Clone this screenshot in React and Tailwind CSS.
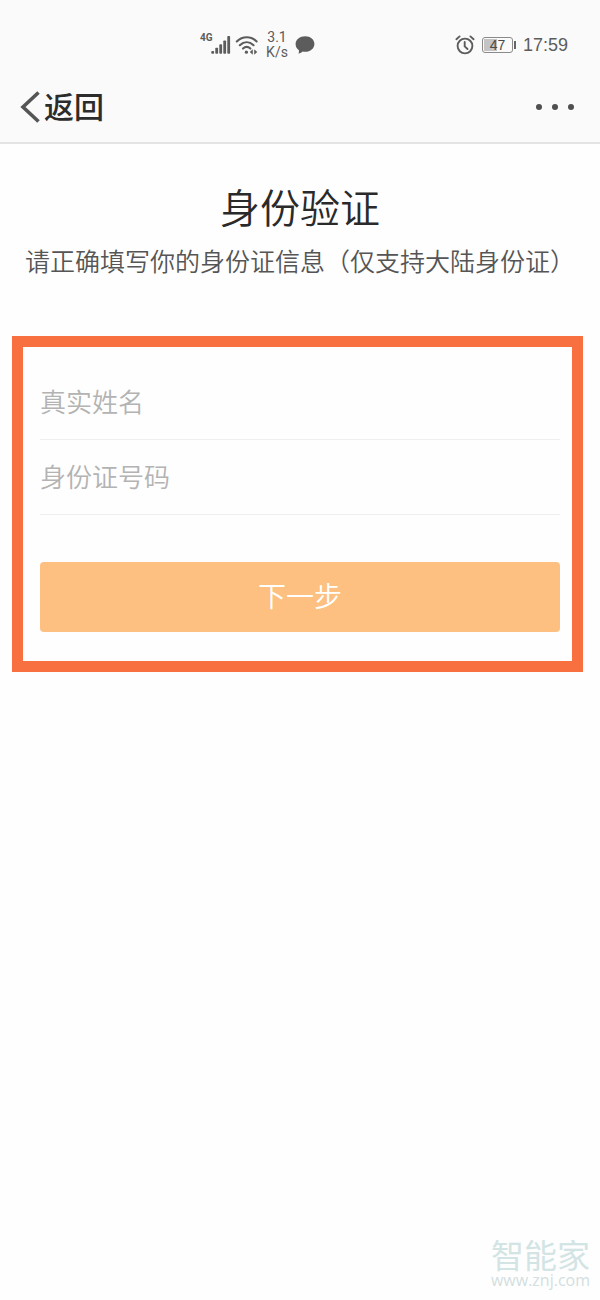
import { useState } from 'react'

const FIELDS = [
  { id: 'realName', label: '真实姓名' },
  { id: 'idNumber', label: '身份证号码' },
]

function SignalIcon() {
  return (
    <svg viewBox="0 0 20 20" className="h-5 w-5" fill="#5c5c5c" aria-hidden="true">
      <rect x="0.3" y="16" width="2.8" height="2.8" rx="0.8" />
      <rect x="4.3" y="12.8" width="2.8" height="6" rx="0.8" />
      <rect x="8.3" y="9.2" width="2.8" height="9.6" rx="0.8" />
      <rect x="12.3" y="5.4" width="2.8" height="13.4" rx="0.8" />
      <rect x="16.3" y="1" width="2.8" height="17.8" rx="0.8" />
    </svg>
  )
}

function WifiIcon() {
  return (
    <svg viewBox="0 0 24 20" className="h-5 w-6" fill="none" stroke="#5c5c5c" strokeWidth="2.1" strokeLinecap="round" aria-hidden="true">
      <path d="M1.8 6.4C7.6.8 16 .8 21.6 6.4" />
      <path d="M4.8 10.2C9 6.2 14.4 6.2 18.6 10.2" />
      <path d="M8 13.6C10.4 11.4 13 11.4 15.4 13.6" />
      <circle cx="11.4" cy="17.2" r="1.6" fill="#5c5c5c" stroke="none" />
      <path d="M17.8 14.2v5.6L14.8 17zM19.2 14.2v5.6l3-2.8z" fill="#5c5c5c" stroke="none" />
    </svg>
  )
}

function ChatIcon() {
  return (
    <svg viewBox="0 0 20 20" className="h-5 w-5" fill="#5c5c5c" aria-hidden="true">
      <path d="M10.2 1.2c5.2 0 9.2 3.3 9.2 7.7s-4 7.8-9.2 7.8c-.9 0-1.7-.1-2.5-.3-1 1-2.4 1.9-4.3 2.2.6-1.1.8-2.2.5-3.4C2 13.8.6 11.6.6 8.9c0-4.4 4.3-7.7 9.6-7.7z" />
    </svg>
  )
}

function AlarmIcon() {
  return (
    <svg viewBox="0 0 20 20" className="h-5 w-5" fill="none" stroke="#5c5c5c" strokeWidth="1.9" strokeLinecap="round" strokeLinejoin="round" aria-hidden="true">
      <circle cx="10" cy="11" r="7.4" />
      <path d="M9.7 7v4.4l2.8 2.6" />
      <path d="M1.4 4.2 4.6 1.4M18.6 4.2l-3.2-2.8" />
    </svg>
  )
}

function Battery() {
  return (
    <div className="flex items-center gap-px">
      <div className="relative flex h-4 w-[31px] items-center justify-center rounded-[3px] border border-[#8a8a8a] text-sm leading-none text-[#4a4a4a]">
        <span className="absolute inset-y-px left-px w-[13px] bg-[#c4c4c4]" />
        <span className="relative">47</span>
      </div>
      <span className="h-2 w-0.5 bg-[#666]" />
    </div>
  )
}

function StatusBar() {
  return (
    <div className="flex h-[72px] items-center justify-between pt-[18px] pr-8 pl-[200px] font-['Roboto','Noto_Sans_CJK_SC',sans-serif] text-[#5c5c5c]">
      <div className="flex items-center">
        <span className="w-[11px] self-start text-[10px] leading-4 font-bold">4G</span>
        <SignalIcon />
        <span className="ml-1">
          <WifiIcon />
        </span>
        <span className="ml-1 w-7 text-center text-sm leading-[15px]">
          3.1
          <br />
          K/s
        </span>
        <span className="ml-1">
          <ChatIcon />
        </span>
      </div>
      <div className="flex items-center font-['Liberation_Sans',sans-serif]">
        <AlarmIcon />
        <span className="mx-[7px]">
          <Battery />
        </span>
        <span className="text-lg leading-5">17:59</span>
      </div>
    </div>
  )
}

function NavBar() {
  return (
    <nav className="flex h-[70px] items-center justify-between pr-6 pl-5">
      <button type="button" className="flex items-center gap-1 text-[30px] leading-9 font-medium text-[#2c2c2c]">
        <svg viewBox="0 0 20 32" className="h-8 w-5" fill="none" stroke="#555" strokeWidth="3.6" aria-hidden="true">
          <path d="M18.5 1.5 3 16l15.5 14.5" />
        </svg>
        <span className="pb-1">返回</span>
      </button>
      <button type="button" aria-label="更多" className="flex items-center gap-[10px] p-0.5">
        <span className="h-1.5 w-1.5 rounded-full bg-[#4f4f4f]" />
        <span className="h-1.5 w-1.5 rounded-full bg-[#4f4f4f]" />
        <span className="h-1.5 w-1.5 rounded-full bg-[#4f4f4f]" />
      </button>
    </nav>
  )
}

export default function App() {
  const [values, setValues] = useState({ realName: '', idNumber: '' })

  const update = (e) => setValues({ ...values, [e.target.id]: e.target.value })

  return (
    <div className="flex min-h-screen flex-col bg-[#fefefe] font-['Noto_Sans_CJK_SC',sans-serif]">
      <header className="border-b-2 border-[#e4e4e4] bg-[#fafafa]">
        <StatusBar />
        <NavBar />
      </header>

      <main>
        <div className="pt-[38px] pb-[58px] text-center">
          <h1 className="text-[40px] leading-12 font-[350] text-[#2a2a2a]">身份验证</h1>
          <p className="mt-3 text-[25px] leading-9 font-[350] whitespace-nowrap text-[#555]">
            请正确填写你的身份证信息（仅支持大陆身份证）
          </p>
        </div>

        <form
          onSubmit={(e) => e.preventDefault()}
          className="mr-[17px] ml-3 border-[11px] border-[#f97040] pt-[18px] pr-3 pb-[29px] pl-[17px]"
        >
          {FIELDS.map(f => (
            <div key={f.id} className="border-b border-[#efefef]">
              <input
                id={f.id}
                type="text"
                aria-label={f.label}
                value={values[f.id]}
                onChange={update}
                placeholder={f.label}
                className="block h-[74px] w-full bg-transparent pb-1 text-[26px] leading-10 font-[350] text-[#333] outline-none placeholder:text-[#b3b3b3]"
              />
            </div>
          ))}
          <button type="submit" className="mt-[47px] block h-[70px] w-full rounded bg-[#fdc080] pb-1 text-[28px] font-[350] text-white">
            下一步
          </button>
        </form>
      </main>

      <footer className="mt-auto mr-2.5 mb-2.5 self-end text-center text-[#d3e4e4]">
        <div className="text-[33px] leading-8">智能家</div>
        <div className="font-['Open_Sans',sans-serif] text-base leading-5 text-[#d3dede]">www.znj.com</div>
      </footer>
    </div>
  )
}
